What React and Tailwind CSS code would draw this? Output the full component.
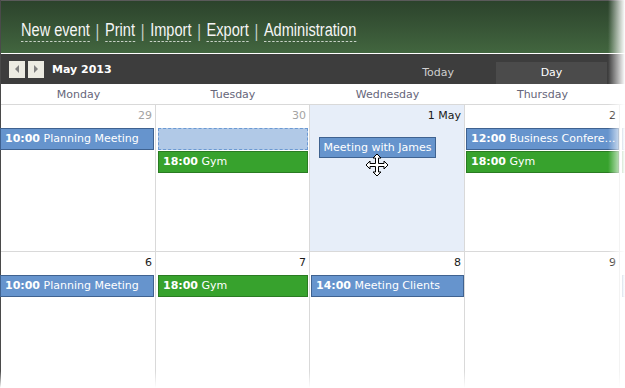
import React from "react";

const Blue = ({ time, title, className = "" }) => (
  <div className={`h-[22px] border border-[#3f6290] bg-[#6694cd] text-white text-[11px] leading-[20px] pl-[4px] pr-[1px] whitespace-nowrap overflow-hidden text-ellipsis ${className}`}>
    {time && <b className="font-bold">{time}</b>} {title}
  </div>
);
const Green = ({ time, title, className = "" }) => (
  <div className={`h-[22px] border border-[#2a7b22] bg-[#37a22d] text-white text-[11px] leading-[20px] pl-[4px] pr-[1px] whitespace-nowrap overflow-hidden text-ellipsis ${className}`}>
    <b className="font-bold">{time}</b> {title}
  </div>
);

const Cell = ({ num, muted, bg = "bg-white", children, w }) => (
  <div className={`${w} shrink-0 border-r border-[#d9d9d9] ${bg} flex flex-col`}>
    <div className={`h-[23px] pt-[4px] pr-[3px] text-right text-[11px] leading-[14px] ${muted ? "text-[#a3a3a3]" : "text-[#1a1a1a]"}`}>{num}</div>
    <div className="flex flex-col gap-[1px]">{children}</div>
  </div>
);

const Link = ({ children }) => (
  <span className="border-b border-dashed border-[#d8e0d8] leading-[19px] pb-[1px]">{children}</span>
);
const Sep = () => <span className="text-[#c8d0c8] mx-[7px]">|</span>;

export default function App() {
  return (
    <div className="relative w-[625px] h-[388px] overflow-hidden bg-white font-['DejaVu_Sans',sans-serif]">
      <div className="border-l border-[#4a4a4a] flex flex-col">
        {/* header */}
        <div className="h-[53px] border-t border-[#5a5a5a] bg-gradient-to-b from-[#2c432c] to-[#42663f] flex items-center pl-[20px] pt-[8px]">
          <div className="flex items-center whitespace-nowrap origin-left scale-x-[0.81] text-[18px] text-[#f5f5f5] font-['Liberation_Sans',Arial,sans-serif]">
            <Link>New event</Link><Sep /><Link>Print</Link><Sep /><Link>Import</Link><Sep /><Link>Export</Link><Sep /><Link>Administration</Link>
          </div>
        </div>
        <div className="h-px bg-white" />
        {/* toolbar */}
        <div className="h-[30px] bg-[#3d3d3d] flex items-end">
          <div className="h-full flex items-center pl-[8px] gap-[3px]">
            <div className="w-[16px] h-[17px] bg-[#ecebe2] flex items-center justify-center">
              <div className="w-0 h-0 border-y-[4px] border-y-transparent border-r-[4px] border-r-[#808080]" />
            </div>
            <div className="w-[16px] h-[17px] bg-[#ecebe2] flex items-center justify-center">
              <div className="w-0 h-0 border-y-[4px] border-y-transparent border-l-[4px] border-l-[#808080]" />
            </div>
            <span className="ml-[5px] mt-[2px] text-white font-bold text-[11px]">May 2013</span>
          </div>
          <div className="ml-auto flex items-end h-full">
            <div className="h-[22px] flex items-center text-[11px] text-[#cfcfcf] pr-[42px]">Today</div>
            <div className="h-[22px] w-[111px] bg-[#4b4b4b] flex items-center justify-center text-[11px] text-white mr-[18px]">Day</div>
          </div>
        </div>
        {/* day names */}
        <div className="h-[21px] border-b border-[#d9d9d9] flex text-[11px] text-[#66667a]">
          <div className="w-[155px] shrink-0 text-center leading-[22px]">Monday</div>
          <div className="w-[154px] shrink-0 text-center leading-[22px]">Tuesday</div>
          <div className="w-[155px] shrink-0 text-center leading-[22px]">Wednesday</div>
          <div className="w-[155px] shrink-0 text-center leading-[22px]">Thursday</div>
        </div>
        {/* week 1 */}
        <div className="h-[147px] border-b border-[#d9d9d9] flex">
          <Cell w="w-[155px]" num="29" muted>
            <Blue time="10:00" title="Planning Meeting" className="-ml-px mr-[1px]" />
          </Cell>
          <Cell w="w-[154px]" num="30" muted>
            <div className="h-[22px] ml-[2px] mr-[1px] border border-dashed border-[#6b99d3] bg-[#b1c9e7]" />
            <Green time="18:00" title="Gym" className="ml-[2px] mr-[1px]" />
          </Cell>
          <Cell w="w-[155px]" num="1 May" bg="bg-[#e7eef9]" />
          <Cell w="w-[155px]" num="2">
            <Blue time="12:00" title="Business Conference" className="ml-[1px]" />
            <Green time="18:00" title="Gym" className="ml-[1px]" />
          </Cell>
          <div className="w-[155px] shrink-0 flex flex-col pt-[23px] gap-[1px]">
            <div className="h-[22px] ml-[2px] border border-[#3f6290] bg-[#6694cd]" />
            <div className="h-[22px] ml-[2px] border border-[#2a7b22] bg-[#37a22d]" />
          </div>
        </div>
        {/* week 2 */}
        <div className="h-[140px] flex">
          <Cell w="w-[155px]" num="6">
            <Blue time="10:00" title="Planning Meeting" className="-ml-px mr-[1px]" />
          </Cell>
          <Cell w="w-[154px]" num="7">
            <Green time="18:00" title="Gym" className="ml-[2px] mr-[1px]" />
          </Cell>
          <Cell w="w-[155px]" num="8">
            <Blue time="14:00" title="Meeting Clients" className="ml-[1px]" />
          </Cell>
          <Cell w="w-[155px]" num="9" />
          <div className="w-[155px] shrink-0 flex flex-col pt-[23px]">
            <div className="h-[22px] ml-[2px] border border-[#3f6290] bg-[#6694cd]" />
          </div>
        </div>
      </div>

      {/* drag ghost */}
      <div className="absolute left-[319px] top-[137px] w-[117px] h-[21px] border border-[#3f6290] bg-[#6694cd] text-white text-[11px] leading-[19px] text-center whitespace-nowrap">
        Meeting with James
      </div>
      {/* move cursor */}
      <svg className="absolute left-[365px] top-[153px]" width="24" height="24" viewBox="0 0 24 24">
        <polygon
          points="12,1 16,5 13.5,5 13.5,10.5 19,10.5 19,8 23,12 19,16 19,13.5 13.5,13.5 13.5,19 16,19 12,23 8,19 10.5,19 10.5,13.5 5,13.5 5,16 1,12 5,8 5,10.5 10.5,10.5 10.5,5 8,5"
          fill="white"
          stroke="black"
          strokeWidth="1"
          strokeLinejoin="miter"
        />
      </svg>

      {/* right fade */}
      <div className="absolute right-0 top-0 h-full w-[17px] bg-gradient-to-r from-transparent to-white" />
      {/* bottom fade */}
      <div className="absolute left-0 bottom-0 w-full h-[17px] bg-gradient-to-b from-transparent to-white" />
    </div>
  );
}
